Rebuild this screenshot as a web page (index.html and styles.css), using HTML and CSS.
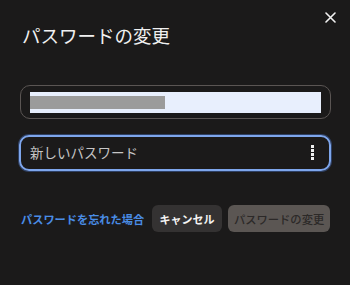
FILE: index.html
```html
<!DOCTYPE html>
<html lang="ja">
<head>
<meta charset="utf-8">
<link rel="stylesheet" href="styles.css">
</head>
<body>
<div class="dialog">
  <div class="header">
    <h1 class="title">パスワードの変更</h1>
    <button class="close" aria-label="閉じる">
      <svg width="11" height="11" viewBox="0 0 11 11"><path d="M1 1L10 10M10 1L1 10" stroke="#f2f2f2" stroke-width="1.6" stroke-linecap="round"/></svg>
    </button>
  </div>
  <div class="field field-current">
    <div class="autofill"><div class="masked"></div></div>
  </div>
  <div class="field field-new">
    <span class="placeholder">新しいパスワード</span>
    <span class="dots"><i></i><i></i><i></i><i></i></span>
  </div>
  <div class="actions">
    <a class="forgot" href="#">パスワードを忘れた場合</a>
    <button class="btn btn-cancel">キャンセル</button>
    <button class="btn btn-submit">パスワードの変更</button>
  </div>
</div>
</body>
</html>
```

FILE: styles.css
```css
html, body {
  margin: 0;
  padding: 0;
  background: #1b1a1a;
  width: 350px;
  height: 285px;
  overflow: hidden;
}
body {
  font-family: "Noto Sans CJK JP", "Noto Sans", sans-serif;
}
.dialog {
  padding: 12px 19px 0 20px;
  display: flex;
  flex-direction: column;
}
.header {
  display: flex;
  justify-content: space-between;
  align-items: flex-start;
}
.title {
  margin: 11px 0 0 2px;
  font-size: 18.5px;
  line-height: 24px;
  font-weight: 400;
  color: #f0f0f0;
}
.close {
  background: none;
  border: 0;
  padding: 0;
  margin: 0 -5px 0 0;
  width: 11px;
  height: 11px;
  display: flex;
}
.field {
  box-sizing: border-box;
  width: 311px;
  border-radius: 10px;
  display: flex;
  align-items: center;
}
.field-current {
  margin-top: 38px;
  height: 34px;
  border: 1px solid #5a5553;
  padding: 0 9px;
}
.autofill {
  flex: 1;
  height: 21px;
  background: #e8effd;
  display: flex;
  align-items: center;
}
.masked {
  width: 135px;
  height: 13px;
  background: #9b9b9b;
}
.field-new {
  margin-top: 16px;
  margin-left: -1px;
  width: 312px;
  height: 36px;
  border: 2px solid #7ea6ec;
  box-shadow: 0 0 0 1px rgba(70, 110, 190, 0.45);
  padding: 0 15px 2px 9px;
  justify-content: space-between;
}
.placeholder {
  font-size: 13.5px;
  color: #c6c6c6;
  line-height: 20px;
}
.dots {
  display: flex;
  flex-direction: column;
  gap: 1px;
}
.dots i {
  display: block;
  width: 3px;
  height: 3px;
  background: #f0f0f0;
}
.actions {
  margin-top: 34px;
  display: flex;
  align-items: center;
}
.forgot {
  margin-left: 1px;
  font-size: 11.2px;
  font-weight: 700;
  color: #4a8de6;
  text-decoration: none;
  white-space: nowrap;
}
.btn {
  border: 0;
  border-radius: 6px;
  height: 27px;
  font-family: inherit;
  font-size: 11px;
  font-weight: 700;
  padding: 0;
}
.btn-cancel {
  margin-left: 8px;
  width: 70px;
  background: #343232;
  color: #f4f4f4;
}
.btn-submit {
  margin-left: 6px;
  width: 102px;
  background: #5b5653;
  color: #2c2928;
  font-size: 11.3px;
  font-weight: 500;
}
```
